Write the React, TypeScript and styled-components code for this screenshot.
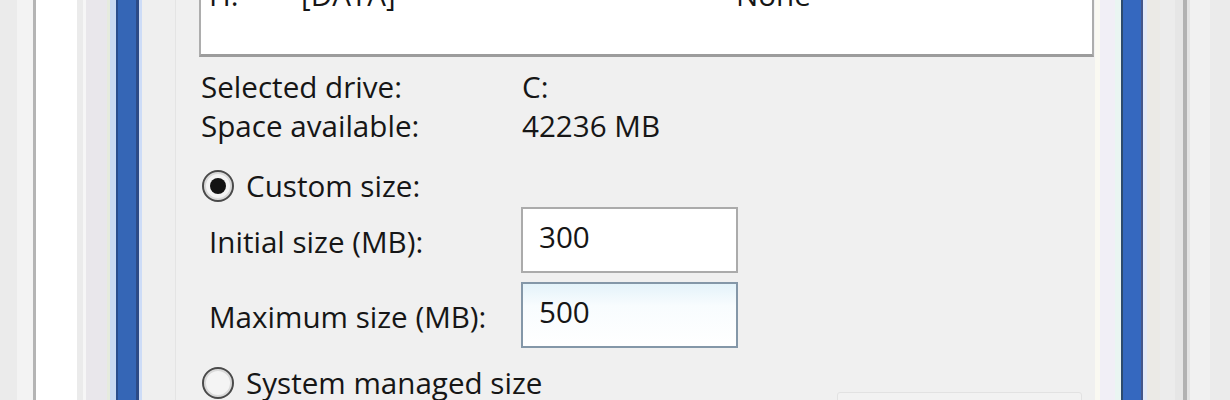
import styled, { createGlobalStyle } from 'styled-components';

const GlobalStyle = createGlobalStyle`
  * {
    box-sizing: border-box;
  }

  body {
    margin: 0;
    background: #f0f0f0;
    overflow: hidden;
  }
`;

export const Screen = styled.div`
  display: flex;
  width: 1230px;
  height: 400px;
  overflow: hidden;
  font-family: 'Open Sans', 'Noto Sans', sans-serif;
  font-size: 29.6px;
  line-height: 39px;
  color: #161616;
`;

export const LeftFrame = styled.div`
  flex: 0 0 175px;
  background: linear-gradient(
    to right,
    #ebebeb 0 17px,
    #f3f3f3 17px 33px,
    #b4b4b4 33px 36px,
    #ffffff 36px 77px,
    #ebebeb 77px 83px,
    #f6f6f6 83px 86px,
    #e9e7eb 86px 107px,
    #e6ebde 107px 110px,
    #c9d9f2 110px 116px,
    #2b4d8c 116px 118px,
    #3566b6 118px 136px,
    #2c4a86 136px 139px,
    #cddcf7 139px 142px,
    #efefef 142px 175px
  );
`;

export const RightFrame = styled.div`
  flex: 0 0 135px;
  background: linear-gradient(
    to right,
    #faf9f2 0 5px,
    #f1eff6 5px 20px,
    #eaf5f2 20px 26px,
    #2d4b6e 26px 28px,
    #3568bf 28px 46px,
    #44568a 46px 48px,
    #e2eaf8 48px 52px,
    #ebeae6 52px 65px,
    #ececec 65px 80px,
    #e6e6e6 80px 88px,
    #b2b2b2 88px 92px,
    #e4e4e4 92px 95px,
    #f1f1f1 95px 115px,
    #ebebeb 115px 135px
  );
`;

export const Panel = styled.div`
  flex: 1;
  display: flex;
  flex-direction: column;
  padding: 0 0 0 23px;
  background: #f0f0f0;
  border-left: 1px solid #e4e4e4;

  & > * {
    flex-shrink: 0;
  }
`;

export const DriveList = styled.div`
  width: 895px;
  height: 102px;
  margin: -45px 0 0;
  padding: 18px 0 0 8px;
  background: #ffffff;
  border: 2px solid #adadad;
  border-bottom: 3px solid #9c9c9c;
  overflow: hidden;
`;

export const DriveRow = styled.div`
  display: grid;
  grid-template-columns: 92px 435px auto;
`;

export const InfoGrid = styled.div`
  display: grid;
  grid-template-columns: 321px auto;
  margin: 10px 0 0 2px;
`;

export const RadioRow = styled.label<{ $gap: number }>`
  display: flex;
  align-items: center;
  gap: 12px;
  margin: ${(p) => p.$gap}px 0 0 3px;
`;

export const Radio = styled.span<{ $checked?: boolean }>`
  position: relative;
  flex: 0 0 32px;
  width: 32px;
  height: 32px;
  border-radius: 50%;
  border: 2px solid #4a4a4a;
  background: #f4f4f4;
  box-shadow: inset 0 0 0 2px #dadada;

  &::after {
    content: '';
    display: ${(p) => (p.$checked ? 'block' : 'none')};
    position: absolute;
    top: 6px;
    left: 6px;
    width: 16px;
    height: 16px;
    border-radius: 50%;
    background: #141414;
  }
`;

export const SizeGrid = styled.div`
  display: grid;
  grid-template-columns: 312px 217px;
  grid-auto-rows: 66px;
  row-gap: 9px;
  margin: 2px 0 0 10px;
`;

export const SizeLabel = styled.div`
  padding: 15px 0 0;
`;

export const SizeInput = styled.div<{ $focused?: boolean }>`
  padding: 8px 16px;
  background: ${(p) =>
    p.$focused ? 'linear-gradient(#e4f3fa, #f8fcfe 35%, #ffffff)' : '#ffffff'};
  border: 2px solid ${(p) => (p.$focused ? '#8497a8' : '#ababab')};
`;

export const BottomRow = styled.div`
  display: flex;
  align-items: flex-start;
  justify-content: space-between;
`;

export const SetButton = styled.div`
  width: 245px;
  height: 40px;
  margin: 44px 13px 0 0;
  border: 1px solid #e2e2e2;
  border-radius: 3px;
  background: #f2f2f2;
`;

export default function App() {
  return (
    <>
      <GlobalStyle />
      <Screen>
        <LeftFrame />
        <Panel>
          <DriveList>
            <DriveRow>
              <span>H:</span>
              <span>[DATA]</span>
              <span>None</span>
            </DriveRow>
          </DriveList>

          <InfoGrid>
            <span>Selected drive:</span>
            <span>C:</span>
            <span>Space available:</span>
            <span>42236 MB</span>
          </InfoGrid>

          <RadioRow $gap={21}>
            <Radio $checked />
            <span>Custom size:</span>
          </RadioRow>

          <SizeGrid>
            <SizeLabel>Initial size (MB):</SizeLabel>
            <SizeInput>300</SizeInput>
            <SizeLabel>Maximum size (MB):</SizeLabel>
            <SizeInput $focused>500</SizeInput>
          </SizeGrid>

          <BottomRow>
            <RadioRow $gap={15}>
              <Radio />
              <span>System managed size</span>
            </RadioRow>
            <SetButton />
          </BottomRow>
        </Panel>
        <RightFrame />
      </Screen>
    </>
  );
}
